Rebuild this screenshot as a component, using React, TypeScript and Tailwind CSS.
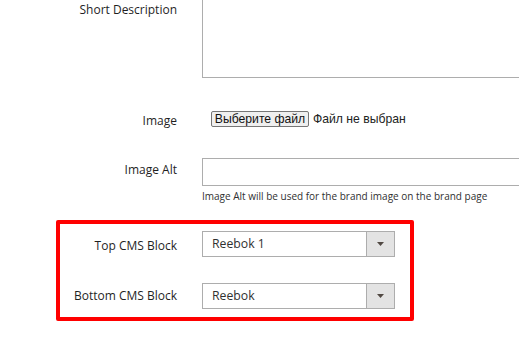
import React from "react";

const font = { fontFamily: '"Open Sans", "Liberation Sans", sans-serif' };

function Label({ children, className = "" }: { children: React.ReactNode; className?: string }) {
  return (
    <div className={`shrink-0 whitespace-nowrap text-right text-[12px] leading-[19px] font-medium text-[#1f1f1f] ${className}`}>
      {children}
    </div>
  );
}

function Select({ value }: { value: string }) {
  return (
    <div className="flex h-[26px] w-[193px] border border-[#adadad] bg-white">
      <div className="flex flex-1 items-center pl-[9px] text-[12.25px] text-[#303030]">{value}</div>
      <div className="flex w-[28px] items-center justify-center border-l border-[#adadad] bg-[#e3e3e3]">
        <svg width="7" height="4" viewBox="0 0 7 4">
          <path d="M0 0h7L3.5 4z" fill="#514943" />
        </svg>
      </div>
    </div>
  );
}

export default function App() {
  return (
    <div className="h-[339px] w-[519px] overflow-hidden bg-white" style={font}>
      {/* Short Description */}
      <div className="flex gap-[25px]">
        <Label className="w-[177px]">Short Description</Label>
        <div className="h-[78px] w-[340px] shrink-0 border border-t-0 border-[#adadad]" />
      </div>

      {/* Image */}
      <div className="mt-[32px] flex h-[19px] items-center gap-[25px]">
        <Label className="mt-[2px] w-[177px]">Image</Label>
        <div
          className="flex items-center whitespace-nowrap pl-[9px]"
          style={{ fontFamily: '"Liberation Sans", Arial, sans-serif' }}
        >
          <button className="h-[16px] w-[98px] rounded-[2px] border border-[#767676] bg-[#efefef] px-0 text-[12.2px] leading-none text-[#111]">
            Выберите файл
          </button>
          <span className="ml-[4px] text-[12.2px] text-[#222]">Файл не выбран</span>
        </div>
      </div>

      {/* Image Alt */}
      <div className="mt-[29px] flex gap-[25px]">
        <Label className="w-[177px] pt-[2px]">Image Alt</Label>
        <div>
          <div className="h-[28px] w-[340px] border border-[#adadad] bg-white" />
          <div className="mt-[3px] whitespace-nowrap text-[10px] leading-[14px] text-[#303030]">
            Image Alt will be used for the brand image on the brand page
          </div>
        </div>
      </div>

      {/* CMS blocks (highlighted) */}
      <div className="ml-[56px] mt-[17px] w-[358px] rounded-[2px] border-4 border-[#ff0000] pb-[8px] pt-[7px]">
        <div className="flex gap-[25px]">
          <Label className="w-[117px] pt-[5px]">Top CMS Block</Label>
          <Select value="Reebok 1" />
        </div>
        <div className="mt-[26px] flex gap-[25px]">
          <Label className="w-[117px] pt-[3px]">Bottom CMS Block</Label>
          <Select value="Reebok" />
        </div>
      </div>
    </div>
  );
}
